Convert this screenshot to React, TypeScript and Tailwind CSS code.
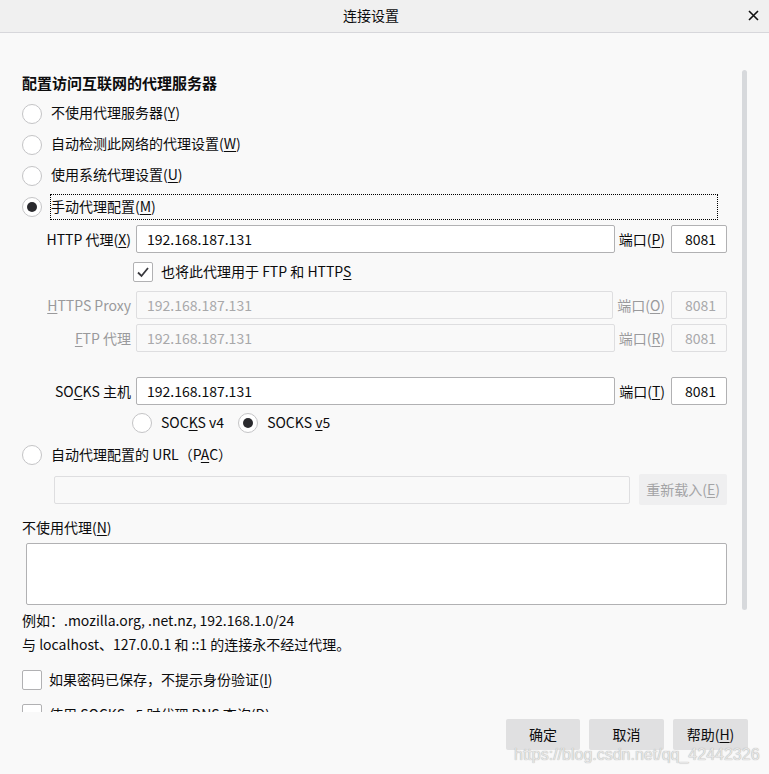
import React from "react";

const F = "font-['Noto_Sans_CJK_SC','Noto_Sans',sans-serif]";

function Radio({ checked }: { checked?: boolean }) {
  return (
    <span className="w-[20px] h-[20px] shrink-0 rounded-full border border-[#c4c4c6] bg-white flex items-center justify-center">
      {checked && <span className="w-[10px] h-[10px] rounded-full bg-[#2a2a2e]" />}
    </span>
  );
}

function Check({ checked }: { checked?: boolean }) {
  return (
    <span className="w-[20px] h-[20px] shrink-0 rounded-[2px] border border-[#b1b1b3] bg-white flex items-center justify-center">
      {checked && (
        <svg width="14" height="14" viewBox="0 0 14 14">
          <path d="M2 7.5 L5.5 11 L12 3" fill="none" stroke="#38383d" strokeWidth="1.8" />
        </svg>
      )}
    </span>
  );
}

function U({ children }: { children: React.ReactNode }) {
  return <span className="underline underline-offset-2">{children}</span>;
}

function Input({ value, disabled, className = "" }: { value?: string; disabled?: boolean; className?: string }) {
  return (
    <div
      className={
        "h-[28px] rounded-[2px] border flex items-center px-[10px] pb-[1px] text-[14px] " +
        (disabled ? "border-[#dedee0] bg-[#f9f9f9] text-[#a8a8aa] " : "border-[#b1b1b3] bg-white text-[#0c0c0d] ") +
        className
      }
    >
      {value}
    </div>
  );
}

function ProxyRow({
  label,
  value,
  port,
  disabled,
  mt,
}: {
  label: React.ReactNode;
  value: string;
  port: React.ReactNode;
  disabled?: boolean;
  mt: string;
}) {
  return (
    <div className={"flex items-center h-[28px] " + mt}>
      <div className={"w-[109px] shrink-0 text-right text-[14px] pb-[1px] " + (disabled ? "text-[#9a9a9c]" : "text-[#0c0c0d]")}>{label}</div>
      <Input value={value} disabled={disabled} className="ml-[5px] flex-1" />
      <div className={"ml-[4px] text-[14px] pb-[1px] " + (disabled ? "text-[#9a9a9c]" : "text-[#0c0c0d]")}>{port}</div>
      <div
        className={
          "ml-[6px] w-[56px] h-[28px] rounded-[2px] border flex items-center justify-end pr-[10px] pb-[1px] text-[14px] " +
          (disabled ? "border-[#dedee0] bg-[#f9f9f9] text-[#a8a8aa]" : "border-[#b1b1b3] bg-white text-[#0c0c0d]")
        }
      >
        8081
      </div>
    </div>
  );
}

function RadioRow({ children, checked, focus }: { children: React.ReactNode; checked?: boolean; focus?: boolean }) {
  return (
    <div className="h-[31px] flex items-center">
      <Radio checked={checked} />
      {focus ? (
        <div className="ml-[8px] flex-1 mr-[9px] h-[26px] border border-dotted border-black flex items-center pb-[2px]">{children}</div>
      ) : (
        <div className="ml-[9px] pb-[3px]">{children}</div>
      )}
    </div>
  );
}

export default function App() {
  return (
    <div className={"w-[769px] h-[774px] bg-[#f9f9f9] relative overflow-hidden text-[#0c0c0d] text-[14px] leading-[20px] " + F}>
      {/* Title bar */}
      <div className="h-[33px] bg-[#f0f0f0] border-b border-[#d7d7db] flex items-center relative">
        <div className="flex-1 text-center pr-[27px] pb-[3px] text-[14px] text-[#0c0c0d]">连接设置</div>
        <svg className="absolute left-[748px] top-[10px]" width="11" height="11" viewBox="0 0 11 11">
          <path d="M1 1 L10 10 M10 1 L1 10" stroke="#111" strokeWidth="1.6" />
        </svg>
      </div>

      {/* Scrollable content */}
      <div className="h-[679px] overflow-hidden pl-[22px] pr-[42px] pt-[40px]">
        <div className="h-[20px] leading-[20px] text-[15px] font-bold">配置访问互联网的代理服务器</div>
        <div className="mt-[5px]">
          <RadioRow>
            不使用代理服务器(<U>Y</U>)
          </RadioRow>
          <RadioRow>
            自动检测此网络的代理设置(<U>W</U>)
          </RadioRow>
          <RadioRow>
            使用系统代理设置(<U>U</U>)
          </RadioRow>
          <RadioRow checked focus>
            手动代理配置(<U>M</U>)
          </RadioRow>
        </div>

        <ProxyRow
          mt="mt-[3px]"
          label={
            <>
              HTTP 代理(<U>X</U>)
            </>
          }
          value="192.168.187.131"
          port={
            <>
              端口(<U>P</U>)
            </>
          }
        />
        <div className="mt-[9px] h-[20px] flex items-center pl-[111px]">
          <Check checked />
          <span className="ml-[8px] pb-[2px]">
            也将此代理用于 FTP 和 HTTP<U>S</U>
          </span>
        </div>
        <ProxyRow
          mt="mt-[9px]"
          disabled
          label={
            <>
              <U>H</U>TTPS Proxy
            </>
          }
          value="192.168.187.131"
          port={
            <>
              端口(<U>O</U>)
            </>
          }
        />
        <ProxyRow
          mt="mt-[5px]"
          disabled
          label={
            <>
              <U>F</U>TP 代理
            </>
          }
          value="192.168.187.131"
          port={
            <>
              端口(<U>R</U>)
            </>
          }
        />
        <ProxyRow
          mt="mt-[25px]"
          label={
            <>
              SO<U>C</U>KS 主机
            </>
          }
          value="192.168.187.131"
          port={
            <>
              端口(<U>T</U>)
            </>
          }
        />
        <div className="mt-[8px] h-[20px] flex items-center pl-[110px]">
          <Radio />
          <span className="ml-[9px] pb-[2px]">
            SOC<U>K</U>S v4
          </span>
          <span className="ml-[14px]">
            <Radio checked />
          </span>
          <span className="ml-[9px] pb-[2px]">
            SOCKS <U>v</U>5
          </span>
        </div>
        <div className="mt-[12px] h-[20px] flex items-center">
          <Radio />
          <span className="ml-[9px] pb-[2px]">
            自动代理配置的 URL（P<U>A</U>C）
          </span>
        </div>
        <div className="mt-[9px] h-[31px] flex items-center pl-[32px]">
          <Input disabled className="flex-1" />
          <div className="ml-[9px] w-[88px] h-[31px] rounded-[2px] bg-[#efeff0] text-[#a3a3a5] flex items-center justify-center pb-[2px] text-[14px]">
            重新载入(<U>E</U>)
          </div>
        </div>
        <div className="mt-[13px] h-[18px] leading-[18px]">
          不使用代理(<U>N</U>)
        </div>
        <div className="mt-[7px] ml-[4px] h-[62px] rounded-[2px] border border-[#b1b1b3] bg-white" />
        <div className="mt-[5px] h-[20px]">例如：.mozilla.org, .net.nz, 192.168.1.0/24</div>
        <div className="mt-[4px] h-[20px]">与 localhost、127.0.0.1 和 ::1 的连接永不经过代理。</div>
        <div className="mt-[16px] h-[20px] flex items-center">
          <Check />
          <span className="ml-[7px] pb-[2px]">
            如果密码已保存，不提示身份验证(<U>I</U>)
          </span>
        </div>
        <div className="mt-[14px] h-[20px] flex items-center">
          <Check />
          <span className="ml-[7px]">
            使用 SOCKS v5 时代理 DNS 查询(<U>D</U>)
          </span>
        </div>
      </div>

      {/* Scrollbar thumb */}
      <div className="absolute left-[742px] top-[70px] w-[5px] h-[540px] rounded-[3px] bg-[#d7d9dc]" />

      {/* Buttons */}
      <div className="mt-[7px] flex justify-end gap-[9px] pr-[21px]">
        <div className="w-[74px] h-[31px] rounded-[2px] bg-[#e0e0e1] flex items-center justify-center pb-[2px]">确定</div>
        <div className="w-[75px] h-[31px] rounded-[2px] bg-[#e0e0e1] flex items-center justify-center pb-[2px]">取消</div>
        <div className="w-[75px] h-[31px] rounded-[2px] bg-[#e0e0e1] flex items-center justify-center pb-[2px]">
          帮助(<U>H</U>)
        </div>
      </div>

      {/* Watermark */}
      <div className="absolute left-[514px] top-[744px] text-[16px] leading-[22px] font-['Liberation_Sans',sans-serif] text-[#e6e6e6] [text-shadow:0_0_1px_#9a9a9a]">
        https://blog.csdn.net/qq_42442326
      </div>
    </div>
  );
}
